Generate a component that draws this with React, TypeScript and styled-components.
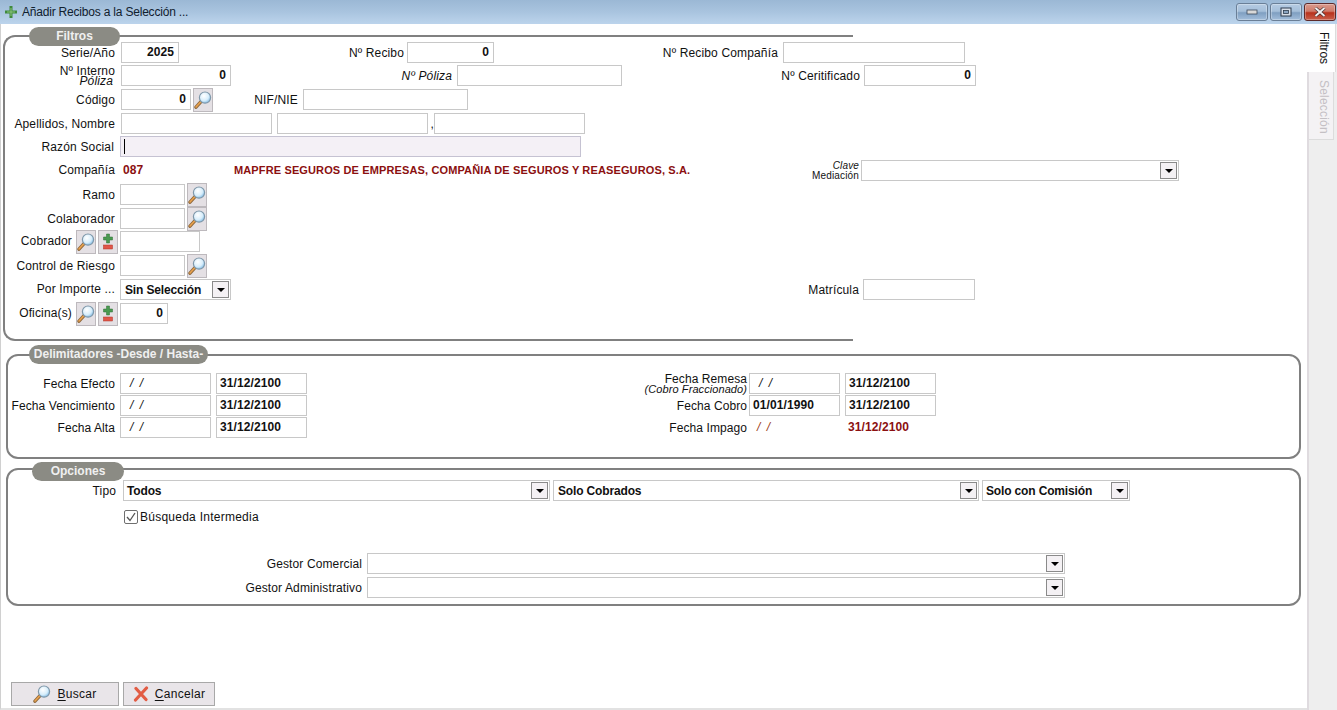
import styled, { createGlobalStyle } from 'styled-components'

const Global = createGlobalStyle`
  html, body {
    margin: 0;
    padding: 0;
    height: 100%;
    background: #fff;
    overflow: hidden;
  }
  body {
    font-family: 'Liberation Sans', Arial, sans-serif;
    font-size: 12px;
    color: #111;
  }
`

const Window = styled.div`
  width: 1337px;
  height: 710px;
  display: flex;
  flex-direction: column;
  overflow: hidden;
`

const TitleBar = styled.div`
  height: 24px;
  flex: none;
  display: flex;
  align-items: center;
  padding: 0 1px 0 4px;
  background: linear-gradient(180deg, #9bb8d5 0%, #a9c4df 50%, #bcd4ec 100%);
`

const TitleText = styled.span`
  margin-left: 4px;
  font-size: 12px;
  letter-spacing: -0.2px;
  color: #10202e;
`

const WindowButtons = styled.div`
  margin-left: auto;
  display: flex;
  gap: 2px;
`

const WinButton = styled.div<{ $close?: boolean }>`
  width: 30px;
  height: 16px;
  border: 1px solid ${({ $close }) => ($close ? '#5d2a2a' : '#6a7f97')};
  border-radius: 3px;
  display: flex;
  align-items: center;
  justify-content: center;
  box-shadow: inset 0 0 0 1px rgba(255, 255, 255, 0.3);
  background: ${({ $close }) =>
    $close
      ? 'linear-gradient(180deg, #d99b8e 0%, #cf7b6a 45%, #b8321c 55%, #c9604c 100%)'
      : 'linear-gradient(180deg, #b5cbe2 0%, #a5bfda 45%, #7f9fc1 55%, #a3bedb 100%)'};
`

const Body = styled.div`
  flex: 1;
  display: flex;
  min-height: 0;
`

const Main = styled.div`
  flex: 1;
  display: flex;
  flex-direction: column;
  position: relative;
  border-left: 1px solid #d0d0d0;
  border-bottom: 2px solid #e2e2e2;
`

const SideTabs = styled.div`
  width: 28px;
  flex: none;
  background: #eeeeee;
  border-left: 2px solid #dfdbdf;
  display: flex;
  flex-direction: column;
  align-items: flex-start;
`

const SideTab = styled.div<{ $active?: boolean; $h: number }>`
  height: ${({ $h }) => $h}px;
  width: ${({ $active }) => ($active ? 29 : 25)}px;
  margin-left: ${({ $active }) => ($active ? -2 : 0)}px;
  box-sizing: border-box;
  writing-mode: vertical-rl;
  padding-top: 8px;
  padding-left: 5px;
  display: flex;
  align-items: center;
  font-size: 12px;
  letter-spacing: ${({ $active }) => ($active ? -0.1 : 0.2)}px;
  color: ${({ $active }) => ($active ? '#111' : '#c4c0c4')};
  background: ${({ $active }) => ($active ? '#fff' : '#f4f2f4')};
  border-right: 1px solid #dcdcdc;
  border-bottom: ${({ $active }) => ($active ? 'none' : '1px solid #dcdcdc')};
`

const Group = styled.fieldset<{ $open?: boolean; $top: number; $left: number; $h: number }>`
  position: relative;
  box-sizing: border-box;
  margin: ${({ $top }) => $top}px 0 0 ${({ $left }) => $left}px;
  padding: 0;
  height: ${({ $h }) => $h}px;
  width: ${({ $open }) => ($open ? 850 : 1295)}px;
  min-inline-size: 0;
  border: 2px solid #808080;
  border-right: ${({ $open }) => ($open ? 'none' : '2px solid #808080')};
  border-radius: ${({ $open }) => ($open ? '12px 0 0 12px' : '12px')};
`

const Pill = styled.div<{ $top: number; $left: number; $w: number }>`
  position: absolute;
  top: ${({ $top }) => $top}px;
  left: ${({ $left }) => $left}px;
  width: ${({ $w }) => $w}px;
  height: 19px;
  border-radius: 10px;
  background: #8b8b84;
  color: #f0f0f0;
  font-weight: bold;
  font-size: 12px;
  line-height: 18px;
  text-align: center;
`

const Rows = styled.div<{ $pt: number; $ls: number }>`
  padding-top: ${({ $pt }) => $pt}px;
  letter-spacing: ${({ $ls }) => $ls}px;
  display: flex;
  flex-direction: column;
`

const Row = styled.div<{ $h: number }>`
  height: ${({ $h }) => $h}px;
  display: flex;
  align-items: flex-start;
`

const Label = styled.div<{ $w: number; $gap?: number; $italic?: boolean; $dy?: number }>`
  flex: none;
  width: ${({ $w }) => $w}px;
  margin-right: ${({ $gap }) => $gap ?? 5}px;
  height: 21px;
  line-height: ${({ $dy }) => 23 + ($dy ?? 0)}px;
  text-align: right;
  white-space: nowrap;
  font-style: ${({ $italic }) => ($italic ? 'italic' : 'normal')};
`

const StackLabel = styled.div<{ $w: number; $gap?: number }>`
  flex: none;
  width: ${({ $w }) => $w}px;
  margin-right: ${({ $gap }) => $gap ?? 5}px;
  height: 21px;
  text-align: right;
  white-space: nowrap;
  display: flex;
  flex-direction: column;
  justify-content: center;
`

const StackLine = styled.span<{ $size?: number; $italic?: boolean; $mr?: number }>`
  line-height: 10px;
  font-size: ${({ $size }) => $size ?? 12}px;
  font-style: ${({ $italic }) => ($italic ? 'italic' : 'normal')};
  margin-right: ${({ $mr }) => $mr ?? 0}px;
`

const Input = styled.div<{ $w: number; $ml?: number; $lilac?: boolean; $right?: boolean }>`
  flex: none;
  box-sizing: border-box;
  width: ${({ $w }) => $w}px;
  height: 21px;
  margin-left: ${({ $ml }) => $ml ?? 0}px;
  padding: 0 4px 0 3px;
  border: 1px solid ${({ $lilac }) => ($lilac ? '#c5c2d2' : '#c8c8c8')};
  background: ${({ $lilac }) => ($lilac ? '#f4f0f6' : '#fff')};
  font-weight: bold;
  letter-spacing: 0.1px;
  line-height: 19px;
  text-align: ${({ $right }) => ($right ? 'right' : 'left')};
  white-space: nowrap;
`

const Caret = styled.span`
  display: inline-block;
  width: 1px;
  height: 15px;
  margin-top: 2px;
  background: #000;
`

const Empty = styled.span<{ $ml?: number; $red?: boolean }>`
  font-style: italic;
  font-weight: normal;
  margin-left: ${({ $ml }) => $ml ?? 6}px;
  word-spacing: 3px;
  color: ${({ $red }) => ($red ? '#9a3a14' : '#111')};
`

const Select = styled.div<{ $w: number; $ml?: number; $pl?: number }>`
  flex: none;
  box-sizing: border-box;
  width: ${({ $w }) => $w}px;
  height: 21px;
  margin-left: ${({ $ml }) => $ml ?? 0}px;
  padding: 0 1px 0 ${({ $pl }) => $pl ?? 4}px;
  border: 1px solid #c8c8c8;
  background: #fff;
  font-weight: bold;
  letter-spacing: -0.15px;
  display: flex;
  align-items: center;
  justify-content: space-between;
  white-space: nowrap;
`

const Arrow = styled.div`
  box-sizing: border-box;
  width: 17px;
  height: 17px;
  border: 1px solid #8a8a8a;
  background: #f4f1f4;
  display: flex;
  align-items: center;
  justify-content: center;

  &::after {
    content: '';
    border-left: 4px solid transparent;
    border-right: 4px solid transparent;
    border-top: 4px solid #000;
  }
`

const IconButton = styled.div<{ $ml?: number }>`
  flex: none;
  box-sizing: border-box;
  width: 20px;
  height: 24px;
  margin: -1px 0 0 ${({ $ml }) => $ml ?? 2}px;
  border: 1px solid #bdb9bd;
  background: #e4e0e4;
  display: flex;
  align-items: center;
  justify-content: center;
`

const RedText = styled.span<{ $ml?: number; $w?: number; $small?: boolean }>`
  flex: none;
  display: block;
  width: ${({ $w }) => ($w ? `${$w}px` : 'auto')};
  margin-left: ${({ $ml }) => $ml ?? 0}px;
  color: #8b1010;
  font-weight: bold;
  font-size: ${({ $small }) => ($small ? 11 : 12)}px;
  letter-spacing: ${({ $small }) => ($small ? 0.13 : 0.1)}px;
  line-height: 21px;
  white-space: nowrap;
`

const CheckRow = styled.div`
  height: 14px;
  margin-left: 116px;
  display: flex;
  align-items: center;
  gap: 2px;
  letter-spacing: 0.25px;
`

const CheckBox = styled.div`
  box-sizing: border-box;
  width: 14px;
  height: 14px;
  border: 1px solid #6f6f6f;
  border-radius: 2px;
  background: #fff;
  display: flex;
  align-items: center;
  justify-content: center;
`

const Footer = styled.div`
  position: absolute;
  left: 10px;
  bottom: 2px;
  display: flex;
  gap: 4px;
`

const FooterButton = styled.div<{ $w: number }>`
  box-sizing: border-box;
  width: ${({ $w }) => $w}px;
  height: 24px;
  border: 1px solid #a8a8a8;
  background: #e9e5e9;
  letter-spacing: 0.3px;
  display: flex;
  align-items: center;
  justify-content: center;
  gap: 6px;

  u {
    text-underline-offset: 2px;
  }
`

const Lens = ({ size = 18 }: { size?: number }) => (
  <svg width={size} height={size} viewBox="0 0 18 18">
    <defs>
      <radialGradient id="lensFill" cx="40%" cy="35%" r="70%">
        <stop offset="0%" stopColor="#ffffff" />
        <stop offset="60%" stopColor="#d8eefb" />
        <stop offset="100%" stopColor="#7ab8e4" />
      </radialGradient>
    </defs>
    <path d="M2 16.2 L7 10.6" stroke="#8f6a3f" strokeWidth="3.4" strokeLinecap="round" />
    <path d="M2 16 L6.8 10.8" stroke="#eba24c" strokeWidth="1.6" strokeLinecap="round" />
    <circle cx="11" cy="6.6" r="5.6" fill="url(#lensFill)" stroke="#7f98aa" strokeWidth="1.2" />
  </svg>
)

const PlusMinus = () => (
  <svg width="12" height="18" viewBox="0 0 12 18">
    <path d="M4.5 1h3v3h3v3h-3v3h-3V7h-3V4h3z" fill="#4a9a50" stroke="#2f6f36" strokeWidth="0.5" />
    <rect x="1.5" y="12" width="9" height="4" fill="#e0574a" stroke="#b23025" strokeWidth="0.5" />
  </svg>
)

const Find = ({ ml }: { ml?: number }) => (
  <IconButton $ml={ml}>
    <Lens />
  </IconButton>
)

const AddRemove = ({ ml }: { ml?: number }) => (
  <IconButton $ml={ml}>
    <PlusMinus />
  </IconButton>
)

const DateValue = ({ w = 91, ml, value }: { w?: number; ml?: number; value: string }) => (
  <Input $w={w} $ml={ml}>
    {value}
  </Input>
)

const EmptyDate = () => (
  <Input $w={91}>
    <Empty>/ /</Empty>
  </Input>
)

export default function App() {
  return (
    <Window>
      <Global />
      <TitleBar>
        <svg width="14" height="14" viewBox="0 0 14 14">
          <path d="M7 1v12M1 7h12" stroke="#3f8a3c" strokeWidth="3" />
          <path d="M7 3v8M3 7h8" stroke="#8cc47a" strokeWidth="1" />
        </svg>
        <TitleText>Añadir Recibos a la Selección ...</TitleText>
        <WindowButtons>
          <WinButton>
            <svg width="12" height="6" viewBox="0 0 12 6">
              <rect x="1" y="1" width="10" height="4" fill="#d8d8d8" stroke="#3d4c5e" strokeWidth="0.8" />
            </svg>
          </WinButton>
          <WinButton>
            <svg width="12" height="10" viewBox="0 0 12 10">
              <rect x="1" y="1" width="10" height="8" fill="#d8dfe8" stroke="#2f3d4e" strokeWidth="1" />
              <rect x="3.5" y="3.5" width="5" height="3" fill="#8aa5c2" stroke="#2f3d4e" strokeWidth="0.8" />
            </svg>
          </WinButton>
          <WinButton $close>
            <svg width="14" height="10" viewBox="0 0 14 10">
              <path d="M2.5 1 L11.5 9 M11.5 1 L2.5 9" stroke="#3c2a2a" strokeWidth="3.2" />
              <path d="M2.5 1 L11.5 9 M11.5 1 L2.5 9" stroke="#f2f0f0" strokeWidth="2" />
            </svg>
          </WinButton>
        </WindowButtons>
      </TitleBar>
      <Body>
        <Main>
          <Group $open $top={11} $left={2} $h={306}>
            <Pill $top={-10} $left={24} $w={91}>Filtros</Pill>
            <Rows $pt={5} $ls={0.15}>
              <Row $h={23}>
                <Label $w={110} $gap={6}>Serie/Año</Label>
                <Input $w={58} $right>2025</Input>
                <Label $w={225} $gap={3}>Nº Recibo</Label>
                <Input $w={87} $right>0</Input>
                <Label $w={284} $gap={5}>Nº Recibo Compañía</Label>
                <Input $w={182} />
              </Row>
              <Row $h={24}>
                <StackLabel $w={110} $gap={6}>
                  <StackLine>Nº Interno</StackLine>
                  <StackLine $italic $mr={2}>Póliza</StackLine>
                </StackLabel>
                <Input $w={110} $right>0</Input>
                <Label $w={221} $italic>Nº Póliza</Label>
                <Input $w={165} />
                <Label $w={238} $gap={4}>Nº Ceritificado</Label>
                <Input $w={112} $right>0</Input>
              </Row>
              <Row $h={24}>
                <Label $w={110} $gap={6}>Código</Label>
                <Input $w={70} $right>0</Input>
                <Find />
                <Label $w={85} $gap={5}>NIF/NIE</Label>
                <Input $w={165} />
              </Row>
              <Row $h={23}>
                <Label $w={110} $gap={6} $dy={-1}>Apellidos, Nombre</Label>
                <Input $w={151} />
                <Input $w={151} $ml={5} />
                <Label $w={6} $gap={0}>,</Label>
                <Input $w={151} />
              </Row>
              <Row $h={24}>
                <Label $w={109} $gap={6}>Razón Social</Label>
                <Input $w={461} $lilac><Caret /></Input>
              </Row>
              <Row $h={24}>
                <Label $w={110} $gap={8} $dy={-2}>Compañía</Label>
                <RedText $w={111}>087</RedText>
                <RedText $w={456} $small>MAPFRE SEGUROS DE EMPRESAS, COMPAÑIA DE SEGUROS Y REASEGUROS, S.A.</RedText>
                <StackLabel $w={169} $gap={2}>
                  <StackLine $size={10} $italic>Clave</StackLine>
                  <StackLine $size={10}>Mediación</StackLine>
                </StackLabel>
                <Select $w={318}><span /><Arrow /></Select>
              </Row>
              <Row $h={24}>
                <Label $w={110}>Ramo</Label>
                <Input $w={65} />
                <Find />
              </Row>
              <Row $h={23}>
                <Label $w={110}>Colaborador</Label>
                <Input $w={65} />
                <Find />
              </Row>
              <Row $h={24}>
                <Label $w={67} $gap={4} $dy={-2}>Cobrador</Label>
                <Find ml={0} />
                <AddRemove />
                <Input $w={80} $ml={2} />
              </Row>
              <Row $h={24}>
                <Label $w={110}>Control de Riesgo</Label>
                <Input $w={65} />
                <Find />
              </Row>
              <Row $h={24}>
                <Label $w={110} $dy={-2}>Por Importe ...</Label>
                <Select $w={111}>
                  Sin Selección
                  <Arrow />
                </Select>
                <Label $w={628} $gap={4}>Matrícula</Label>
                <Input $w={112} />
              </Row>
              <Row $h={21}>
                <Label $w={67} $gap={4} $dy={-2}>Oficina(s)</Label>
                <Find ml={0} />
                <AddRemove />
                <Input $w={48} $ml={2} $right>0</Input>
              </Row>
            </Rows>
          </Group>

          <Group $top={13} $left={5} $h={105}>
            <Pill $top={-11} $left={21} $w={179}>Delimitadores -Desde / Hasta-</Pill>
            <Rows $pt={17} $ls={0.08}>
              <Row $h={22}>
                <Label $w={107} $gap={5}>Fecha Efecto</Label>
                <EmptyDate />
                <DateValue ml={5} value="31/12/2100" />
                <StackLabel $w={440} $gap={2}>
                  <StackLine>Fecha Remesa</StackLine>
                  <StackLine $size={11} $italic>(Cobro Fraccionado)</StackLine>
                </StackLabel>
                <EmptyDate />
                <DateValue ml={5} value="31/12/2100" />
              </Row>
              <Row $h={22}>
                <Label $w={107} $gap={5}>Fecha Vencimiento</Label>
                <EmptyDate />
                <DateValue ml={5} value="31/12/2100" />
                <Label $w={440} $gap={2}>Fecha Cobro</Label>
                <DateValue value="01/01/1990" />
                <DateValue ml={5} value="31/12/2100" />
              </Row>
              <Row $h={21}>
                <Label $w={107} $gap={5}>Fecha Alta</Label>
                <EmptyDate />
                <DateValue ml={5} value="31/12/2100" />
                <Label $w={440} $gap={2}>Fecha Impago</Label>
                <RedText $w={91} $ml={8}><Empty $ml={0} $red>/ /</Empty></RedText>
                <RedText>31/12/2100</RedText>
              </Row>
            </Rows>
          </Group>

          <Group $top={9} $left={5} $h={138}>
            <Pill $top={-8} $left={24} $w={92}>Opciones</Pill>
            <Rows $pt={10} $ls={0.12}>
              <Row $h={30}>
                <Label $w={108} $gap={7}>Tipo</Label>
                <Select $w={427} $pl={3}>Todos<Arrow /></Select>
                <Select $w={426} $ml={3}>Solo Cobrados<Arrow /></Select>
                <Select $w={148} $ml={3} $pl={3}>Solo con Comisión<Arrow /></Select>
              </Row>
              <CheckRow>
                <CheckBox>
                  <svg width="12" height="12" viewBox="0 0 12 12">
                    <path d="M2 6 L5 9.5 L10 2" fill="none" stroke="#555" strokeWidth="1.3" />
                  </svg>
                </CheckBox>
                Búsqueda Intermedia
              </CheckRow>
              <Row $h={29} />
              <Row $h={24}>
                <Label $w={354}>Gestor Comercial</Label>
                <Select $w={698}><span /><Arrow /></Select>
              </Row>
              <Row $h={24}>
                <Label $w={354}>Gestor Administrativo</Label>
                <Select $w={698}><span /><Arrow /></Select>
              </Row>
            </Rows>
          </Group>

          <Footer>
            <FooterButton $w={108}>
              <Lens />
              <span><u>B</u>uscar</span>
            </FooterButton>
            <FooterButton $w={92}>
              <svg width="16" height="16" viewBox="0 0 16 16">
                <path d="M3 2.5 L13 13.5 M13.5 2 L2.5 14" stroke="#e25c44" strokeWidth="3.2" strokeLinecap="round" />
              </svg>
              <span><u>C</u>ancelar</span>
            </FooterButton>
          </Footer>
        </Main>
        <SideTabs>
          <SideTab $active $h={48}>Filtros</SideTab>
          <SideTab $h={68}>Selección</SideTab>
        </SideTabs>
      </Body>
    </Window>
  )
}
